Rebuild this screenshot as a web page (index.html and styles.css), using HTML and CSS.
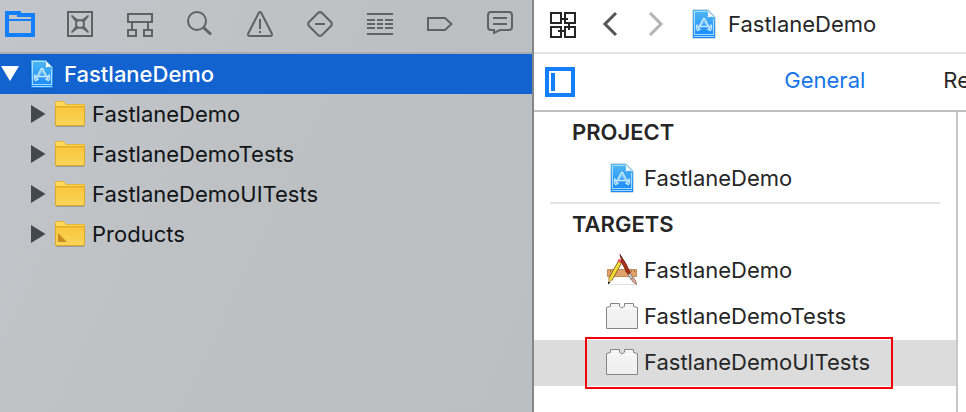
FILE: index.html
```html
<!DOCTYPE html>
<html lang="en">
<head>
<meta charset="utf-8">
<title>FastlaneDemo</title>
<link rel="stylesheet" href="styles.css">
</head>
<body>
<svg class="defs" aria-hidden="true">
  <defs>
    <linearGradient id="sky" x1="0" y1="0" x2="0" y2="1"><stop offset="0" stop-color="#50b8f2"/><stop offset="1" stop-color="#1787fb"/></linearGradient>
    <linearGradient id="gold" x1="0" y1="0" x2="0" y2="1"><stop offset="0" stop-color="#f8c63a"/><stop offset="1" stop-color="#fcd55c"/></linearGradient>
    <linearGradient id="brick-fill" x1="0" y1="0" x2="0" y2="1"><stop offset="0" stop-color="#f6f6f6"/><stop offset="1" stop-color="#eeeeee"/></linearGradient>
    <symbol id="doc" viewBox="0 0 24 30">
      <path d="M.5 .5H16L23.500 8V29.500H.5z" fill="#174f80" opacity=".4"/>
      <path d="M1 1H15.500L23 8.500V29H1z" fill="url(#sky)"/>
      <path d="M2.500 25.500V2.500H14.500M21.500 10V25.500M2 25.500H22M2 27.500H22" fill="none" stroke="#c3e9ff" stroke-width="1" opacity=".8"/>
      <path d="M15 1L23 9C20 7.500 18 7.500 15.500 8.500C16.500 6 16 3 15 1z" fill="#f4f9fc"/>
      <path d="M11.500 9.500L6.500 19M12.500 9.500L17.500 19M4.500 17.500H19.500M5 16L4.500 20M19 16L19.500 20M8 20L5.500 21.500M16 20L18.500 21.500" fill="none" stroke="#d5f0ff" stroke-width="1.600" stroke-linecap="round" opacity=".9"/>
      <path d="M9 17L12 12L15 17" fill="none" stroke="#a5d9ff" stroke-width="1"/>
    </symbol>
    <symbol id="folder" viewBox="0 0 30 26">
      <path d="M1 25.500H29" stroke="#7f8489" stroke-width="1" opacity=".6"/>
      <path d="M.5 2Q.5 .5 2 .5H8.500L11 3.500H29Q29.500 3.500 29.500 4V8H.5z" fill="#ffd95c" stroke="#e9b52e"/>
      <path d="M.5 5.500H29.500V24.500H.5z" fill="url(#gold)" stroke="#dea724"/>
      <path d="M1 6H29" stroke="#e5b22f"/>
    </symbol>
    <symbol id="brick" viewBox="0 0 34 28">
      <path d="M1.500 26.500V5.500L5.500 4.500V1.500H14.500V4Q17 7.500 19.500 4V1.500H28.500V4.500L32.500 5.500V26.500z" fill="url(#brick-fill)" stroke="#858585" stroke-width="1"/>
      <path d="M2.500 6.500H14M20 6.500H31.500" stroke="#fff"/>
    </symbol>
    <symbol id="closed" viewBox="0 0 16 20"><path d="M1 1L15.500 10L1 19z" fill="#43484c"/></symbol>
  </defs>
</svg>
<div class="window">
  <aside class="navigator">
    <nav class="nav-bar" aria-label="Navigators">
      <button class="nav-button active" aria-label="Project"><svg viewBox="0 0 30 30"><path fill="currentColor" stroke="none" fill-rule="evenodd" d="M0 2H16V4H30V28H0zM4 6H12V8H26V10H4zM4 12H26V24H4z"/></svg></button>
      <button class="nav-button" aria-label="Source control"><svg viewBox="0 0 30 30"><path d="M3 3H27V27H3z"/><circle cx="15" cy="15" r="4"/><path fill="currentColor" stroke="none" d="M6 7L7 6L13 10.500L10.500 13zM24 7L23 6L17 10.500L19.500 13zM6 23L7 24L13 19.500L10.500 17zM24 23L23 24L17 19.500L19.500 17z"/></svg></button>
      <button class="nav-button" aria-label="Symbols"><svg viewBox="0 0 30 30"><path d="M3 5H27V13H3zM7 14V20M23 14V20M3 21H11V27H3zM19 21H27V27H19z"/></svg></button>
      <button class="nav-button" aria-label="Find"><svg viewBox="0 0 30 30"><circle cx="12" cy="12" r="9"/><path stroke-width="3" d="M18.500 18.500L26 25.500"/></svg></button>
      <button class="nav-button" aria-label="Issues"><svg viewBox="0 0 30 30"><path stroke-linejoin="round" d="M13.700 4Q15 2.200 16.300 4L26.800 24.500Q27.500 27 25.500 27H4.500Q2.500 27 3.200 24.500zM15 10V20M15 22V24"/></svg></button>
      <button class="nav-button" aria-label="Tests"><svg viewBox="0 0 30 30"><path d="M13 4Q15 2.200 17 4L26 13Q27.800 15 26 17L17 26Q15 27.800 13 26L4 17Q2.200 15 4 13zM10 15H20"/></svg></button>
      <button class="nav-button" aria-label="Debug"><svg viewBox="0 0 30 30"><path d="M2 5H28M2 25H28M2 11H10M12 11H18M20 11H28M2 15H10M12 15H18M20 15H28M2 19H10M12 19H18M20 19H28"/></svg></button>
      <button class="nav-button" aria-label="Breakpoints"><svg viewBox="0 0 30 30"><path d="M3 9H20L26.500 15L20 21H3z"/></svg></button>
      <button class="nav-button" aria-label="Reports"><svg viewBox="0 0 30 30"><path d="M6 3H24Q27 3 27 6V18Q27 21 24 21H15L9 24V21H6Q3 21 3 18V6Q3 3 6 3zM8 9H22M8 15H22"/></svg></button>
    </nav>
    <ul class="tree">
      <li class="tree-row root"><svg class="disclosure open" viewBox="0 0 20 16"><path d="M1 0H19L10 15z" fill="#fff"/></svg><svg class="doc"><use href="#doc"/></svg><span>FastlaneDemo</span></li>
      <li class="tree-row"><svg class="disclosure"><use href="#closed"/></svg><svg class="folder"><use href="#folder"/></svg><span>FastlaneDemo</span></li>
      <li class="tree-row"><svg class="disclosure"><use href="#closed"/></svg><svg class="folder"><use href="#folder"/></svg><span>FastlaneDemoTests</span></li>
      <li class="tree-row"><svg class="disclosure"><use href="#closed"/></svg><svg class="folder"><use href="#folder"/></svg><span>FastlaneDemoUITests</span></li>
      <li class="tree-row"><svg class="disclosure"><use href="#closed"/></svg><svg class="folder" viewBox="0 0 30 26"><use href="#folder"/><path d="M3 12L12 21H3z" fill="#c88b20"/></svg><span>Products</span></li>
    </ul>
  </aside>
  <main class="editor">
    <header class="jump-bar">
      <button class="related" aria-label="Related items"><svg viewBox="0 0 26 26"><path d="M1 1H11V11H1zM15 1H25V11H15zM1 15H11V25H1zM15 15H25V25H15zM10 7H18M19 10V18M8 19H16"/></svg></button>
      <button class="arrow back" aria-label="Back"><svg viewBox="0 0 16 26"><path d="M14 2L3 13L14 24"/></svg></button>
      <button class="arrow forward" aria-label="Forward"><svg viewBox="0 0 16 26"><path d="M2 2L13 13L2 24"/></svg></button>
      <svg class="doc"><use href="#doc"/></svg><span>FastlaneDemo</span>
    </header>
    <div class="tab-bar">
      <button class="panel-toggle" aria-label="Hide targets list"><svg viewBox="0 0 30 30"><path d="M2 2H28V28H2zM8 6V24"/></svg></button>
      <nav class="tabs"><a class="selected" href="#general">General</a><a href="#re">Re</a></nav>
    </div>
    <section class="content" id="general">
      <div class="targets">
        <h2>PROJECT</h2>
        <ul><li><span class="entry"><svg class="doc"><use href="#doc"/></svg>FastlaneDemo</span></li></ul>
        <hr>
        <h2>TARGETS</h2>
        <ul>
          <li><span class="entry"><svg class="app" viewBox="0 0 34 32"><path d="M5 30.500H31" stroke="#e2e2e2"/><path d="M2.500 15.500H31.500V22.500H2.500z" fill="#dfa26b" stroke="#c48d5a"/><path d="M5.500 16V18M8.500 16V18M11.500 16V18M20.500 16V18M23.500 16V18M26.500 16V18M29.500 16V18" stroke="#a36e3e"/><path d="M15 8L5 26" stroke="#775d14" stroke-width="4.500"/><path d="M15 8L5 26" stroke="#f5df34" stroke-width="2.800"/><path d="M13.500 5L17.500 6.500L16.500 9.500L12.500 7.500z" fill="#ed4c5c"/><path d="M3.500 24.500L7 26.500L3 30z" fill="#d8b477"/><path d="M3 27.500V30.500L5.500 28.500z" fill="#222"/><path d="M15 .5L21 10L25.500 19.500L23 20.500L17.500 10z" fill="#b52f17" stroke="#6d2515"/><path d="M23 20.500L25.500 19.500L28 24L26 25.500z" fill="#ccc" stroke="#8b8584"/><path d="M26 25L28.500 24Q31.500 27 31.500 30.500Q28 29 26 25z" fill="#ddb1a0" stroke="#a87869"/></svg>FastlaneDemo</span></li>
          <li><span class="entry"><svg class="brick"><use href="#brick"/></svg>FastlaneDemoTests</span></li>
          <li class="current"><span class="entry marked"><svg class="brick"><use href="#brick"/></svg>FastlaneDemoUITests</span></li>
        </ul>
      </div>
    </section>
  </main>
</div>
</body>
</html>
```
FILE: styles.css
```css
* { box-sizing: border-box; }
body { margin: 0; overflow: hidden; background: #fff; color: #262626; font: 22px/40px Inter, "Liberation Sans", sans-serif; }
.defs { position: absolute; width: 0; height: 0; }
ul { margin: 0; padding: 0; list-style: none; }
button { padding: 0; border: 0; background: none; color: inherit; font: inherit; }
svg { display: block; flex: none; }
.window { display: grid; grid-template-columns: minmax(0, 534fr) minmax(0, 432fr); min-height: 100vh; }

.navigator { border-right: 2px solid #83878a; background: linear-gradient(115deg, #c2c6ca, #bcc0c3 55%, #bbbfc2); color: #111417; }
.nav-bar { display: flex; gap: 20px; height: 54px; padding-bottom: 4px; border-bottom: 2px solid #a9adaf; color: #5f6366; }
.nav-button { display: flex; flex: 0 0 40px; align-items: center; justify-content: center; }
.nav-button svg { width: 30px; height: 30px; fill: none; stroke: currentColor; stroke-width: 2; }
.nav-bar .active { color: #147efb; }

.tree-row { display: flex; align-items: center; height: 40px; padding-left: 30px; white-space: nowrap; }
.disclosure { width: 16px; height: 20px; margin-right: 9px; }
.folder { width: 30px; height: 26px; margin-right: 7px; }
.doc { width: 24px; height: 30px; }
.root { padding-left: 0; background: #1262cf; color: #fff; font-weight: 500; }
.root .disclosure { width: 20px; height: 16px; margin-right: 10px; }
.root .doc { margin-right: 10px; }

.editor { display: flex; flex-direction: column; min-width: 0; }
.jump-bar { display: flex; align-items: center; height: 54px; padding: 0 16px 4px; border-bottom: 2px solid #e5e5e5; white-space: nowrap; }
.related svg { width: 26px; height: 26px; fill: none; stroke: #262626; stroke-width: 2; }
.jump-bar .related { padding-top: 2px; }
.arrow svg { width: 16px; height: 26px; fill: none; stroke: currentColor; stroke-width: 3; }
.back { margin-left: 26px; color: #555; }
.forward { margin: 0 28px 0 30px; color: #b3b3b3; }
.jump-bar .doc { margin-right: 12px; }
.tab-bar { display: flex; align-items: center; height: 58px; padding-left: 11px; border-bottom: 2px solid #bfbfbf; overflow: hidden; }
.panel-toggle svg { width: 30px; height: 30px; fill: none; stroke: #147efb; stroke-width: 4; }
.tabs { display: flex; gap: 78px; margin: 0 -4px 0 auto; padding-bottom: 4px; }
.tabs a { color: inherit; text-decoration: none; }
.tabs .selected { color: #1675ea; }

.content { display: flex; flex: 1; padding-right: 8px; }
.targets { flex: 1; min-width: 0; border-right: 2px solid #c8c8c8; }
h2 { height: 44px; margin: 0; padding-left: 38px; font-size: 22px; font-weight: 600; }
hr { height: 2px; margin: 0 16px; border: 0; background: #e4e4e4; }
.targets li { display: flex; align-items: center; height: 46px; padding: 0 0 2px 71px; }
.current { background: #dcdcdc; }
.entry { display: flex; align-items: center; white-space: nowrap; }
.entry svg { margin-right: 5px; }
.entry .doc { margin: 0 10px 0 5px; }
.app { width: 34px; height: 32px; }
.brick { width: 34px; height: 28px; }
.marked { position: relative; }
.marked::after { content: ""; position: absolute; inset: -5px -23px -7px -20px; border: 2px solid #f40009; }
```
